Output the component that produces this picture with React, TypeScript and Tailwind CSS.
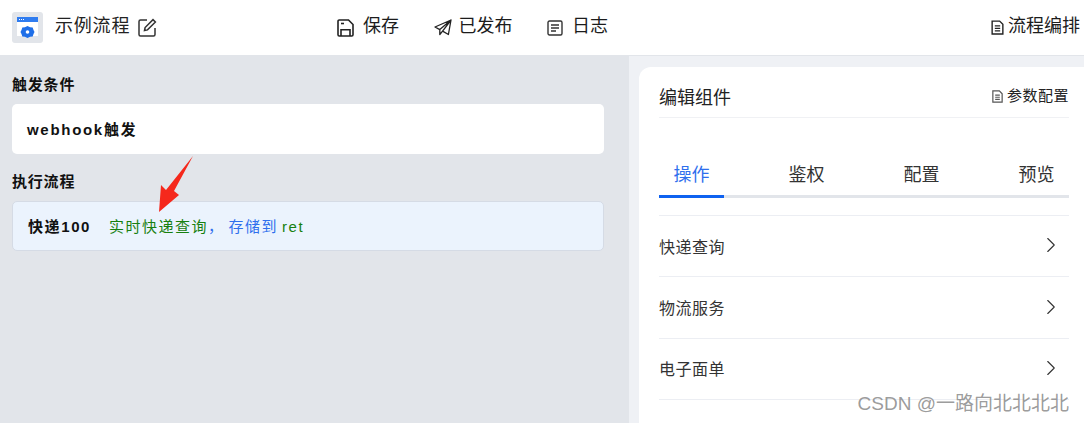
import { ChevronRight } from 'lucide-react';

const tabs = ['操作', '鉴权', '配置', '预览'];
const services = ['快递查询', '物流服务', '电子面单'];

function LogoIcon() {
  return (
    <div className="flex h-[31px] w-[31px] items-center justify-center rounded-[3px] bg-[#e2e5ea]">
      <svg width="22" height="22" viewBox="0 0 22 22">
        <rect x="0" y="0" width="21" height="19" fill="#ffffff" />
        <rect x="0" y="0" width="21" height="5" fill="#2f7cf0" />
        <rect x="2" y="2" width="1" height="1" fill="#ffffff" />
        <rect x="4" y="2" width="1" height="1" fill="#ffffff" />
        <rect x="6" y="2" width="1" height="1" fill="#ffffff" />
        <path d="M10.500 9l2.600 1.300 2.600.1.800 2.500 1 2.100-1 2.100-.8 2.500-2.600.1-2.600 1.300-2.600-1.300-2.600-.1-.8-2.500-1-2.100 1-2.100.8-2.500 2.600-.1z" fill="#1f6fe8" />
        <circle cx="10.500" cy="15" r="1.800" fill="#ffffff" />
      </svg>
    </div>
  );
}

function EditIcon() {
  return (
    <svg width="19" height="19" viewBox="0 0 19 19" fill="none" stroke="#333333" strokeWidth="1.5">
      <path d="M9 2H2.500a1.500 1.500 0 0 0-1.500 1.500v13a1.500 1.500 0 0 0 1.500 1.500h13a1.500 1.500 0 0 0 1.500-1.500V10" />
      <path d="M6.500 12.500l.6-3L15 1.600l2.400 2.400-7.900 7.900z" />
    </svg>
  );
}

function SaveIcon() {
  return (
    <svg width="17" height="18" viewBox="0 0 17 18" fill="none" stroke="#222222" strokeWidth="1.600">
      <path d="M1 2.200A1.200 1.200 0 0 1 2.200 1h9.300L16 5.500v10.300a1.200 1.200 0 0 1-1.200 1.200H2.200A1.200 1.200 0 0 1 1 15.800z" />
      <path d="M4 17v-6.200h9V17" />
      <path d="M4 4.500h3" />
    </svg>
  );
}

function SendIcon() {
  return (
    <svg width="18" height="17" viewBox="0 0 18 17" fill="none" stroke="#222222" strokeWidth="1.300" strokeLinejoin="round">
      <path d="M17 1L1 8l4.800 2.600zM17 1l-2.600 14.500-5.800-3.400zM17 1L5.800 10.600V15.500l2.800-3.400" />
    </svg>
  );
}

function LogIcon() {
  return (
    <svg width="16" height="16" viewBox="0 0 16 16" fill="none" stroke="#333333" strokeWidth="1.400">
      <rect x="1" y="1" width="14" height="14" rx="1.500" />
      <path d="M4 5h8M4 8h8M4 11h5" />
    </svg>
  );
}

function DocIcon({ size, color }: { size: number; color: string }) {
  return (
    <svg width={size} height={size} viewBox="0 0 14 14" fill="none" stroke={color} strokeWidth="1.300">
      <path d="M2 1h7l3 3v9H2z" />
      <path d="M4.500 5.500h5M4.500 7.800h5M4.500 10.100h5" />
    </svg>
  );
}

export default function App() {
  return (
    <div className="relative flex h-[423px] w-[1084px] flex-col overflow-hidden bg-white font-['Liberation_Sans','Noto_Sans_CJK_SC',sans-serif]">
      {/* Header */}
      <header className="flex h-[55px] shrink-0 items-center pr-[4px] pl-[12px]">
        <div className="flex w-[325px] items-center">
          <LogoIcon />
          <span className="ml-[12px] pb-[2px] text-[18px] tracking-[0.800px] text-[#222222]">示例流程</span>
          <span className="ml-[8px]">
            <EditIcon />
          </span>
        </div>
        <div className="flex items-center gap-[34.500px] text-[18px] text-[#1c1c1c]">
          <div className="flex items-center gap-[9px]">
            <SaveIcon />
            <span className="pb-[2px]">保存</span>
          </div>
          <div className="flex items-center gap-[7px]">
            <SendIcon />
            <span className="pb-[2px]">已发布</span>
          </div>
          <div className="flex items-center gap-[9px]">
            <LogIcon />
            <span className="pb-[2px]">日志</span>
          </div>
        </div>
        <div className="ml-auto flex items-center gap-[3px] text-[18px] text-[#1c1c1c]">
          <DocIcon size={15} color="#222222" />
          <span className="pb-[2px]">流程编排</span>
        </div>
      </header>

      <div className="flex min-h-0 flex-1">
        {/* Left panel */}
        <main className="w-[629px] shrink-0 bg-[#e2e5ea] pt-[20px] pr-[25px] pl-[12px]">
          <h2 className="text-[15px] leading-[20px] font-bold tracking-[0.800px] text-[#111111]">触发条件</h2>
          <div className="mt-[9px] flex h-[50px] items-center rounded-[5px] bg-white pt-[2px] pl-[15px] text-[15px] font-bold tracking-[1.700px] text-[#111111]">
            webhook触发
          </div>
          <h2 className="mt-[18px] text-[15px] leading-[20px] font-bold tracking-[0.800px] text-[#111111]">执行流程</h2>
          <div className="mt-[9px] flex h-[50px] items-center rounded-[5px] border border-[#d5dbe5] bg-[#ebf3fd] pt-[2px] pl-[15px] text-[15px] tracking-[1.500px]">
            <span className="font-bold tracking-[1.600px] text-[#111111]">快递100</span>
            <span className="ml-[18px] text-[#17800f]">实时快递查询</span>
            <span className="text-[#2f6fed]">，</span>
            <span className="ml-[4px] text-[#2f6fed]">存储到</span>
            <span className="ml-[4px] text-[#17800f]">ret</span>
          </div>
        </main>

        {/* Right panel */}
        <aside className="flex-1 border-t border-[#e2e5ea] bg-[#eff1f5] pt-[11px] pl-[10px]">
          <div className="h-full rounded-tl-[12px] bg-white pt-[12px] pr-[15px] pl-[20px]">
            <div className="flex h-[39px] items-center justify-between border-b border-[#f0f1f4] pb-[4px]">
              <span className="mt-[4px] text-[18px] text-[#222222]">编辑组件</span>
              <div className="flex items-center gap-[3px] text-[15px] tracking-[0.500px] text-[#222222]">
                <DocIcon size={13} color="#555555" />
                <span>参数配置</span>
              </div>
            </div>

            <div className="mt-[37px] flex gap-[50px] border-b-[3px] border-[#e2e5ea]">
              {tabs.map((tab, i) => (
                <div
                  key={tab}
                  className={`-mb-[3px] flex h-[43px] w-[65px] shrink-0 items-center justify-center border-b-[3px] text-[18px] ${
                    i === 0 ? 'border-[#0f62f0] text-[#2f6fed]' : 'border-transparent text-[#333333]'
                  }`}
                >
                  {tab}
                </div>
              ))}
            </div>

            <div className="mt-[17px] border-t border-[#eceef3]">
              {services.map(name => (
                <div key={name} className="flex h-[61.400px] items-center justify-between border-b border-[#eceef3] pt-[3px] pr-[5px] text-[16px] tracking-[0.500px] text-[#333333]">
                  <span>{name}</span>
                  <ChevronRight size={26} strokeWidth={1} className="mb-[5px] text-[#333333]" />
                </div>
              ))}
            </div>
          </div>
        </aside>
      </div>

      {/* Annotation arrow drawn over the screenshot */}
      <svg className="absolute top-[154px] left-[155px]" width="40" height="60" viewBox="0 0 40 60">
        <path d="M38 2L19 37l5 4L4 58 6 31l5 5z" fill="#f5281c" />
      </svg>

      {/* Watermark */}
      <div className="absolute top-[392px] right-[15px] text-[19px] leading-[24px] text-[#8f8f8f]/90">
        CSDN @一路向北北北北
      </div>
    </div>
  );
}
